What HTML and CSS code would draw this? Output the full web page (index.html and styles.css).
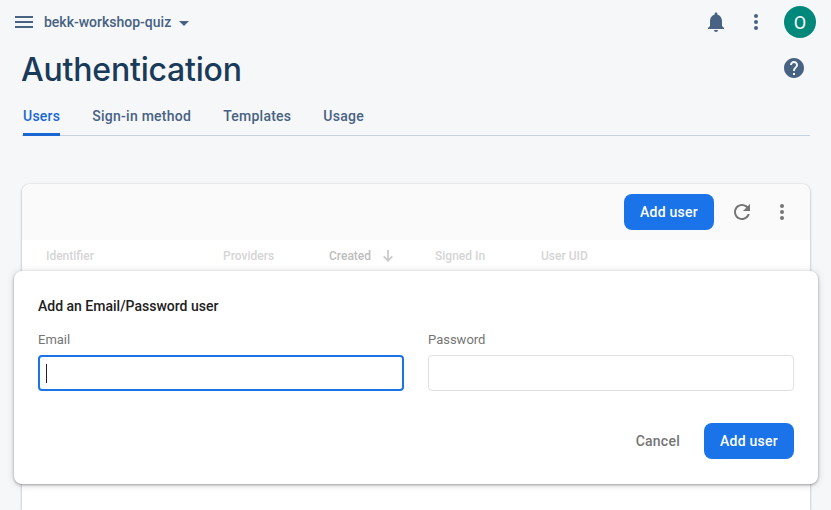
FILE: index.html
```html
<!DOCTYPE html>
<html lang="en">
<head>
<meta charset="utf-8">
<title>Authentication</title>
<link rel="stylesheet" href="styles.css">
</head>
<body>
<header class="topbar">
  <svg class="menu" width="18" height="12" viewBox="0 0 18 12"><path d="M0 1h18M0 6h18M0 11h18" stroke="currentColor" stroke-width="1.8"/></svg>
  <span class="project">bekk-workshop-quiz</span>
  <svg class="caret" width="10" height="5" viewBox="0 0 10 5"><path d="M0 0h10L5 5z" fill="currentColor"/></svg>
  <svg class="bell" width="24" height="24" viewBox="0 0 24 24"><path fill="currentColor" d="M12 22c1.1 0 2-.9 2-2h-4c0 1.1.9 2 2 2zm6-6v-5c0-3.070-1.630-5.640-4.500-6.320V4c0-.83-.67-1.500-1.500-1.500s-1.500.67-1.500 1.500v.68C7.640 5.360 6 7.920 6 11v5l-2 2v1h16v-1l-2-2z"/></svg>
  <svg class="dots" width="24" height="24" viewBox="0 0 24 24" fill="currentColor"><circle cx="12" cy="6" r="2"/><circle cx="12" cy="12" r="2"/><circle cx="12" cy="18" r="2"/></svg>
  <span class="avatar">O</span>
</header>
<div class="heading">
  <h1>Authentication</h1>
  <svg class="help" width="24" height="24" viewBox="0 0 24 24"><path fill="currentColor" d="M12 2C6.480 2 2 6.480 2 12s4.480 10 10 10 10-4.480 10-10S17.520 2 12 2zm1 17h-2v-2h2v2zm2.070-7.750l-.9.920C13.450 12.900 13 13.500 13 15h-2v-.5c0-1.100.45-2.100 1.170-2.830l1.240-1.260c.37-.36.59-.86.59-1.410 0-1.100-.9-2-2-2s-2 .9-2 2H8c0-2.210 1.790-4 4-4s4 1.790 4 4c0 .88-.36 1.680-.93 2.250z"/></svg>
</div>
<nav class="tabs">
  <a class="tab active">Users</a>
  <a class="tab">Sign-in method</a>
  <a class="tab">Templates</a>
  <a class="tab">Usage</a>
</nav>
<main class="panel">
  <div class="toolbar">
    <button class="primary">Add user</button>
    <svg class="refresh" width="24" height="24" viewBox="0 0 24 24"><path fill="currentColor" d="M17.650 6.350C16.200 4.900 14.210 4 12 4c-4.420 0-7.990 3.580-7.990 8s3.570 8 7.990 8c3.730 0 6.840-2.550 7.730-6h-2.080c-.82 2.330-3.040 4-5.650 4-3.310 0-6-2.690-6-6s2.690-6 6-6c1.660 0 3.140.69 4.220 1.780L13 11h7V4l-2.350 2.350z"/></svg>
    <svg class="dots" width="24" height="24" viewBox="0 0 24 24" fill="currentColor"><circle cx="12" cy="6" r="2"/><circle cx="12" cy="12" r="2"/><circle cx="12" cy="18" r="2"/></svg>
  </div>
  <div class="columns">
    <span>Identifier</span>
    <span>Providers</span>
    <span class="sorted">Created <svg width="10" height="12" viewBox="0 0 10 12"><path d="M5 0v11M.7 6.300L5 10.700l4.300-4.400" fill="none" stroke="currentColor" stroke-width="1.700"/></svg></span>
    <span>Signed In</span>
    <span>User UID</span>
  </div>
  <form class="dialog">
    <h2>Add an Email/Password user</h2>
    <div class="fields">
      <label>Email<span class="input focused"><i class="cursor"></i></span></label>
      <label>Password<span class="input"></span></label>
    </div>
    <div class="actions">
      <span class="cancel">Cancel</span>
      <button type="button" class="primary">Add user</button>
    </div>
  </form>
</main>
</body>
</html>
```

FILE: styles.css
```css
* { box-sizing: border-box; }
html { background: #f6f7f9; }
body {
  margin: 0;
  height: 510px;
  overflow: hidden;
  font-family: Roboto, "Liberation Sans", sans-serif;
  font-size: 14px;
  color: #476282;
}
svg { display: block; flex: none; }
.topbar { height: 44px; padding: 0 15px; display: flex; align-items: center; }
.project { margin-left: 11px; font-weight: 500; line-height: 20px; }
.caret { margin: 2px 0 0 8px; }
.bell { margin-left: auto; }
.topbar .dots { margin: 0 16px; }
.avatar {
  width: 32px;
  height: 32px;
  border-radius: 50%;
  background: #00897b;
  color: #fff;
  font-size: 18px;
  line-height: 33px;
  text-align: center;
}
.heading { height: 50px; padding: 0 25px 2px 22px; display: flex; align-items: center; justify-content: space-between; }
h1 { margin: 0 0 0 -1px; padding-top: 4px; font: 500 32px/40px Inter, sans-serif; letter-spacing: -.2px; color: #1a3a5a; }
.tabs { height: 42px; margin: 0 21px 0 22px; padding-left: 1px; display: flex; gap: 32px; border-bottom: 1px solid #c3d1e0; }
.tab { height: 42px; padding-top: 12px; line-height: 20px; font-weight: 500; letter-spacing: .25px; }
.active { color: #1967d2; border-bottom: 3px solid #1967d2; border-radius: 2px 2px 0 0; }
.panel {
  height: 326px;
  margin: 48px 21px 0 22px;
  background: #fff;
  border-radius: 8px 8px 0 0;
  box-shadow: 0 1px 3px rgba(0, 0, 0, .28), 0 0 1px rgba(0, 0, 0, .2);
}
.toolbar { height: 56px; padding-right: 16px; display: flex; align-items: center; justify-content: flex-end; gap: 16px; background: #fafafa; border-radius: 8px 8px 0 0; color: #757575; }
.primary {
  width: 90px;
  height: 36px;
  padding: 0;
  border: 0;
  border-radius: 8px;
  background: #1a73e8;
  color: #fff;
  font: 500 14px Roboto, sans-serif;
  letter-spacing: .25px;
}
.columns { height: 31px; padding-left: 24px; display: grid; grid-template-columns: 177px 106px 106px 106px 1fr; align-items: center; font-size: 12px; font-weight: 500; color: #d5d5d5; }
.sorted { display: flex; align-items: center; gap: 12px; color: #bdbdbd; }
.sorted svg { color: #cacaca; }
.dialog {
  height: 213px;
  margin: 0 -8px;
  padding: 25px 24px 24px;
  background: #fff;
  border-radius: 8px;
  box-shadow: 0 1px 3px rgba(0, 0, 0, .35), 0 1px 10px rgba(0, 0, 0, .12);
}
h2 { margin: 0; font-size: 14px; font-weight: 500; line-height: 21px; color: #212121; }
.fields { margin-top: 13px; display: grid; grid-template-columns: 366px 366px; gap: 24px; }
label { line-height: 20px; font-size: 13px; color: #757575; }
.input { height: 36px; margin-top: 5px; display: flex; align-items: center; border: 1px solid #e0e0e0; border-radius: 4px; }
.focused { border: 2px solid #1a73e8; padding-left: 6px; }
.cursor { width: 1px; height: 19px; background: #222; }
.actions { margin-top: 32px; display: flex; align-items: center; justify-content: flex-end; gap: 24px; }
.cancel { font-weight: 500; letter-spacing: .25px; color: #757575; }
```
